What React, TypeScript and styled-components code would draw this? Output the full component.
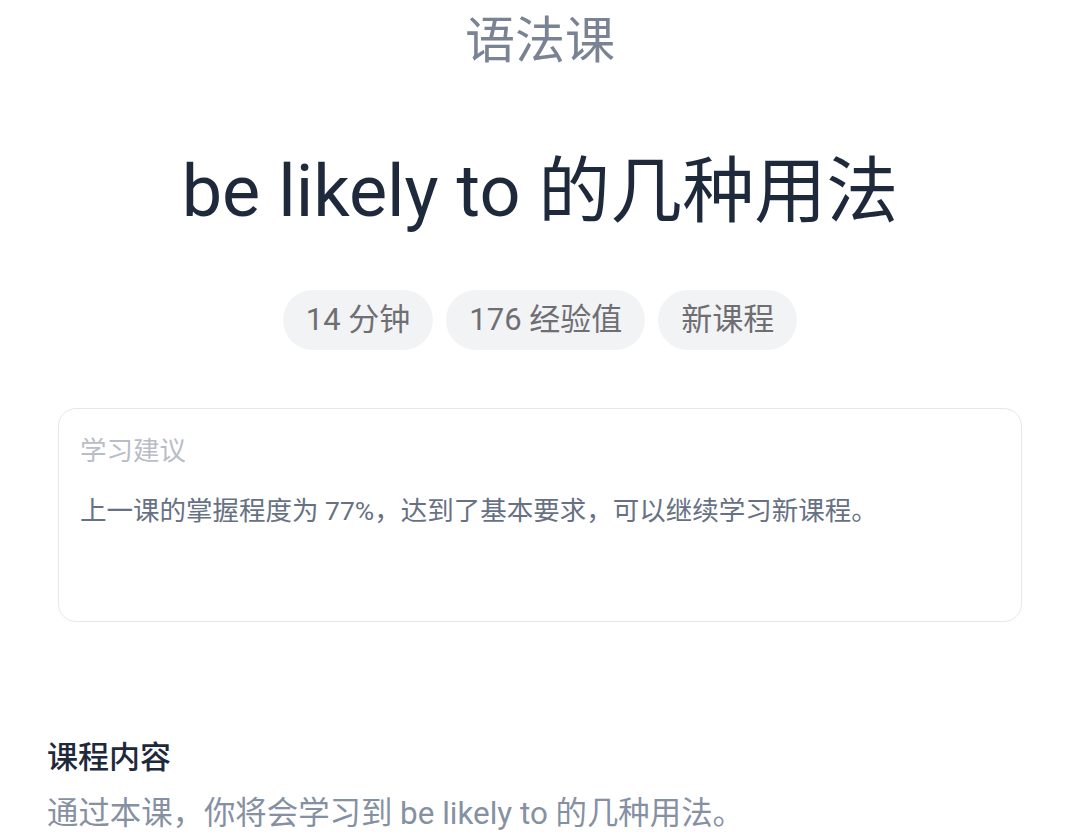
import React from "react";
import styled, { createGlobalStyle } from "styled-components";

const Global = createGlobalStyle`
  html, body { margin: 0; padding: 0; background: #ffffff; }
  body { font-family: Roboto, "Noto Sans CJK SC", sans-serif; }
  * { box-sizing: border-box; }
`;

const Page = styled.div`
  width: 1080px;
  height: 840px;
  overflow: hidden;
  display: flex;
  flex-direction: column;
`;

const Header = styled.header`
  display: flex;
  flex-direction: column;
  align-items: center;
`;

const Category = styled.div`
  font-size: 50px;
  line-height: 82px;
  color: #7a8394;
`;

const Title = styled.h1`
  margin: 60px 0 0;
  font-size: 72px;
  line-height: 100px;
  font-weight: 400;
  color: #1e293b;
`;

const Tags = styled.div`
  margin-top: 48px;
  display: flex;
  gap: 13px;
`;

const Tag = styled.span`
  height: 60px;
  padding: 0 23px;
  border-radius: 30px;
  background: #f2f3f5;
  color: #6f6f73;
  font-size: 31px;
  line-height: 60px;
`;

const AdviceCard = styled.section`
  margin: 58px 58px 0;
  height: 214px;
  border: 1px solid #e5e7eb;
  border-radius: 18px;
  padding: 22px 21px;
  display: flex;
  flex-direction: column;
`;

const AdviceLabel = styled.div`
  font-size: 26.5px;
  line-height: 40px;
  color: #b9bdc6;
`;

const AdviceText = styled.p`
  margin: 20px 0 0;
  font-size: 26.5px;
  line-height: 40px;
  color: #677184;
`;

const Content = styled.section`
  margin: 113px 47px 0;
  display: flex;
  flex-direction: column;
`;

const ContentHeading = styled.h2`
  margin: 0;
  font-size: 31px;
  line-height: 46px;
  font-weight: 500;
  color: #1e293b;
`;

const ContentText = styled.p`
  margin: 10px 0 0;
  font-size: 31.4px;
  line-height: 46px;
  color: #8591a3;
`;

export default function App() {
  return (
    <Page>
      <Global />
      <Header>
        <Category>语法课</Category>
        <Title>be likely to 的几种用法</Title>
        <Tags>
          <Tag>14 分钟</Tag>
          <Tag>176 经验值</Tag>
          <Tag>新课程</Tag>
        </Tags>
      </Header>
      <AdviceCard>
        <AdviceLabel>学习建议</AdviceLabel>
        <AdviceText>上一课的掌握程度为 77%，达到了基本要求，可以继续学习新课程。</AdviceText>
      </AdviceCard>
      <Content>
        <ContentHeading>课程内容</ContentHeading>
        <ContentText>通过本课，你将会学习到 be likely to 的几种用法。</ContentText>
      </Content>
    </Page>
  );
}
